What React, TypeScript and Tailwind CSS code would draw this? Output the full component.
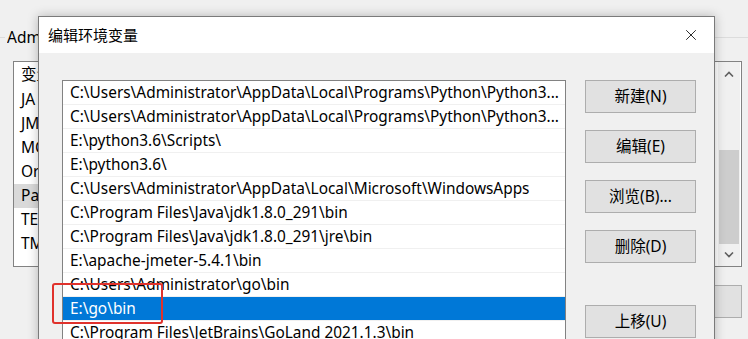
import { X } from "lucide-react";

const paths = [
  "C:\\Users\\Administrator\\AppData\\Local\\Programs\\Python\\Python3...",
  "C:\\Users\\Administrator\\AppData\\Local\\Programs\\Python\\Python3...",
  "E:\\python3.6\\Scripts\\",
  "E:\\python3.6\\",
  "C:\\Users\\Administrator\\AppData\\Local\\Microsoft\\WindowsApps",
  "C:\\Program Files\\Java\\jdk1.8.0_291\\bin",
  "C:\\Program Files\\Java\\jdk1.8.0_291\\jre\\bin",
  "E:\\apache-jmeter-5.4.1\\bin",
  "C:\\Users\\Administrator\\go\\bin",
  "E:\\go\\bin",
  "C:\\Program Files\\JetBrains\\GoLand 2021.1.3\\bin",
];

const userVars = ["JA", "JM", "MC", "Or", "Pa", "TE", "TM"];

function WinButton({ label, className = "" }: { label: string; className?: string }) {
  return (
    <div
      className={`h-[33px] w-[111px] shrink-0 border border-[#adadad] bg-[#e1e1e1] flex items-center justify-center text-[15.5px] text-black ${className}`}
    >
      {label}
    </div>
  );
}

function Chevron({ up }: { up?: boolean }) {
  return (
    <svg width="10" height="6" viewBox="0 0 10 6" fill="none">
      <path
        d={up ? "M1 5.5 L5 1.5 L9 5.5" : "M1 0.5 L5 4.5 L9 0.5"}
        stroke="#606060"
        strokeWidth="1.6"
      />
    </svg>
  );
}

export default function App() {
  return (
    <div
      className="relative w-[748px] h-[339px] overflow-hidden bg-[#f0f0f0] text-black"
      style={{ fontFamily: '"Noto Sans", "Noto Sans CJK SC", sans-serif' }}
    >
      {/* parent window: user variables group */}
      <div className="pt-[28px] flex items-center h-[46px]">
        <div className="w-[5px] border-t border-[#dcdcdc]" />
        <div className="ml-[2px] w-[31px] overflow-hidden whitespace-nowrap text-[15.5px] leading-[18px]">
          Administrator 的用户变量(U)
        </div>
        <div className="flex-1 border-t border-[#dcdcdc]" />
      </div>

      <div className="ml-[13px] mt-[15px] w-[729px] h-[206px] border border-[#828282] bg-white flex">
        <div className="w-[25px] text-[15.5px] overflow-hidden whitespace-nowrap">
          <div className="h-[26px] pl-[7px] flex items-center">变量</div>
          {userVars.map((v) => (
            <div
              key={v}
              className={`h-[24px] pl-[7px] flex items-center ${v === "Pa" ? "bg-[#d9d9d9]" : ""}`}
            >
              {v}
            </div>
          ))}
        </div>
        <div className="flex-1" />
        <div className="w-[22px] mr-[1px] flex flex-col bg-[#f0f0f0]">
          <div className="h-[23px] flex items-center justify-center">
            <Chevron up />
          </div>
          <div className="flex-1 flex flex-col px-[1px]">
            <div className="h-[65px]" />
            <div className="h-[94px] bg-[#cdcdcd]" />
          </div>
          <div className="h-[22px] flex items-center justify-center">
            <Chevron />
          </div>
        </div>
      </div>

      <div className="mt-[18px] flex justify-end pr-[6px]">
        <div className="w-[28px] h-[33px] border border-[#adadad] bg-[#e1e1e1]" />
      </div>

      {/* edit environment variable dialog */}
      <div className="absolute left-[38px] top-[16px] w-[677px] h-[380px] border border-[#7a7a7a] bg-[#f0f0f0] shadow-[0_0_10px_rgba(0,0,0,0.25)] flex flex-col">
        <div className="h-[36px] shrink-0 bg-white flex items-center justify-between pl-[9px] pr-[14px]">
          <span className="text-[15px]">编辑环境变量</span>
          <X size={18} strokeWidth={1.1} />
        </div>
        <div className="flex shrink-0 pl-[23px] pt-[27px]">
          <div className="w-[504px] h-[300px] shrink-0 border border-[#828282] bg-white overflow-hidden">
            {paths.map((p, i) => (
              <div
                key={i}
                className={`h-[24px] border-b border-[#f0f0f0] pl-[7px] flex items-center whitespace-nowrap overflow-hidden text-[15.4px] ${
                  i === 9 ? "bg-[#0078d7] text-white border-[#0078d7]" : ""
                }`}
              >
                {p}
              </div>
            ))}
          </div>
          <div className="ml-[19px] flex flex-col">
            <WinButton label="新建(N)" />
            <WinButton label="编辑(E)" className="mt-[17px]" />
            <WinButton label="浏览(B)..." className="mt-[17px]" />
            <WinButton label="删除(D)" className="mt-[17px]" />
            <WinButton label="上移(U)" className="mt-[42px]" />
          </div>
        </div>
      </div>

      {/* red annotation */}
      <div className="absolute left-[52px] top-[283px] w-[111px] h-[41px] border-2 border-[#e0322c] rounded-[3px]" />
    </div>
  );
}
